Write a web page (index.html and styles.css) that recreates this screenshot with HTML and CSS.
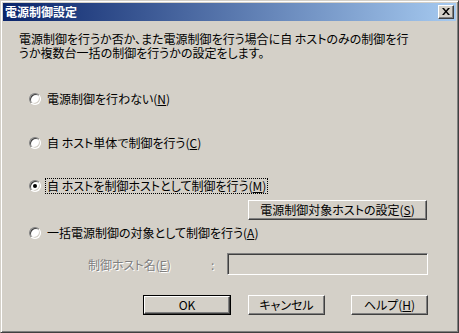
FILE: index.html
```html
<!DOCTYPE html>
<html lang="ja">
<head>
<meta charset="utf-8">
<title>電源制御設定</title>
<link rel="stylesheet" href="styles.css">
</head>
<body>
<div class="window">
  <div class="titlebar">
    <span class="title">電源制御設定</span>
    <span class="close">
      <svg width="8" height="7" viewBox="0 0 8 7"><path d="M0 0h2l2 2.5L6 0h2L5 3.5 8 7H6L4 4.5 2 7H0l3-3.5z" fill="#000"/></svg>
    </span>
  </div>
  <div class="content">
    <p class="desc">電源制御を行うか否か、また電源制御を行う場合に自 ホストのみの制御を行<br>うか複数台一括の制御を行うかの設定をします。</p>
    <div class="opt opt1"><span class="radio"></span><span class="label">電源制御を行わない(<u>N</u>)</span></div>
    <div class="opt opt2"><span class="radio"></span><span class="label">自 ホスト単体で制御を行う(<u>C</u>)</span></div>
    <div class="opt opt3"><span class="radio checked"></span><span class="label focus">自 ホストを制御ホストとして制御を行う(<u>M</u>)</span></div>
    <div class="subrow"><span class="btn wide">電源制御対象ホストの設定(<u>S</u>)</span></div>
    <div class="opt opt4"><span class="radio"></span><span class="label">一括電源制御の対象として制御を行う(<u>A</u>)</span></div>
    <div class="hostrow">
      <span class="dlabel name">制御ホスト名(<u>E</u>)</span>
      <span class="dlabel colon">:</span>
      <span class="field"></span>
    </div>
    <div class="actions">
      <span class="btn default"><span class="inner">OK</span></span>
      <span class="btn cancel">キャンセル</span>
      <span class="btn help">ヘルプ(<u>H</u>)</span>
    </div>
  </div>
</div>
</body>
</html>
```

FILE: styles.css
```css
html, body {
  margin: 0;
  padding: 0;
  background: #d4d0c8;
}
body {
  font-family: "Noto Sans CJK JP", "Noto Sans", sans-serif;
  font-size: 12px;
  font-feature-settings: "palt" 1;
  color: #000;
}
.window {
  width: 459px;
  height: 333px;
  box-sizing: border-box;
  background: #d4d0c8;
  border: 1px solid;
  border-color: #d4d0c8 #404040 #404040 #d4d0c8;
  box-shadow: inset 1px 1px 0 #fff, inset -1px -1px 0 #808080;
  padding: 2px;
  display: flex;
  flex-direction: column;
}
.titlebar {
  height: 18px;
  background: linear-gradient(to right, #0a246a, #a6caf0);
  display: flex;
  align-items: center;
  justify-content: space-between;
  padding: 0 2px 0 2px;
}
.title {
  color: #fff;
  font-weight: bold;
  font-size: 12px;
  line-height: 18px;
  letter-spacing: 0;
}
.close {
  width: 16px;
  height: 14px;
  box-sizing: border-box;
  background: #d4d0c8;
  border: 1px solid;
  border-color: #fff #404040 #404040 #fff;
  box-shadow: inset -1px -1px 0 #808080;
  display: flex;
  align-items: center;
  justify-content: center;
  padding-bottom: 1px;
}
.close svg { display: block; }
.content {
  flex: 1;
  position: relative;
}
.desc {
  margin: 11px 0 0 16px;
  line-height: 14px;
  letter-spacing: 0;
}
.opt {
  display: flex;
  align-items: center;
  height: 16px;
  padding-left: 26px;
}
.opt1 { margin-top: 31px; }
.opt2 { margin-top: 28px; }
.opt3 { margin-top: 27px; }
.opt4 { margin-top: 5px; }
.radio {
  width: 12px;
  height: 12px;
  box-sizing: border-box;
  border-radius: 50%;
  border: 1px solid;
  border-color: #808080 #fff #fff #808080;
  background: #fff;
  box-shadow: inset 1px 1px 0 #404040, inset -1px -1px 0 #d4d0c8;
  position: relative;
  flex: none;
}
.radio.checked::after {
  content: "";
  position: absolute;
  left: 3px;
  top: 3px;
  width: 4px;
  height: 4px;
  border-radius: 50%;
  background: #000;
}
.label {
  margin-left: 5px;
  line-height: 14px;
  padding: 0 1px;
}
.focus {
  outline: 1px dotted #000;
  outline-offset: 0;
}
u { text-decoration: underline; text-underline-offset: 1px; }
.subrow {
  display: flex;
  justify-content: flex-end;
  padding-right: 29px;
  margin-top: 6px;
}
.btn {
  height: 20px;
  box-sizing: border-box;
  display: flex;
  align-items: center;
  justify-content: center;
  background: #d4d0c8;
  border: 1px solid;
  border-color: #fff #404040 #404040 #fff;
  box-shadow: inset -1px -1px 0 #808080;
  line-height: 14px;
}
.wide { width: 179px; }
.hostrow {
  display: flex;
  align-items: center;
  margin-top: 12px;
  height: 22px;
}
.dlabel {
  color: #808080;
  text-shadow: 1px 1px 0 #fff;
}
.name { margin-left: 85px; width: 123px; }
.colon { width: 16px; }
.field {
  width: 201px;
  height: 22px;
  box-sizing: border-box;
  border: 1px solid;
  border-color: #808080 #fff #fff #808080;
  box-shadow: inset 1px 1px 0 #404040, inset -1px -1px 0 #d4d0c8;
  background: #d4d0c8;
}
.actions {
  display: flex;
  margin-top: 20px;
  padding-left: 140px;
}
.btn.default {
  width: 88px;
  border: 1px solid #000;
  box-shadow: none;
  padding: 0;
}
.btn.default .inner {
  width: 100%;
  height: 100%;
  box-sizing: border-box;
  display: flex;
  align-items: center;
  justify-content: center;
  border: 1px solid;
  border-color: #fff #404040 #404040 #fff;
  box-shadow: inset -1px -1px 0 #808080;
}
.cancel { width: 77px; margin-left: 17px; }
.help { width: 77px; margin-left: 26px; }
```
